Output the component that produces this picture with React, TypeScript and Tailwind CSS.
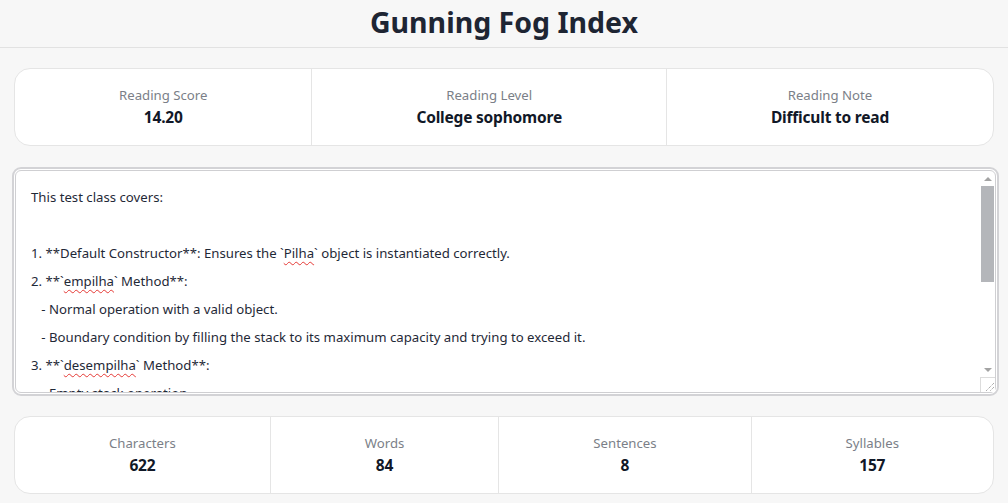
import React from "react";

const font = { fontFamily: '"Noto Sans", "Open Sans", sans-serif' };

function Stat({ label, value, last }: { label: string; value: string; last?: boolean }) {
  return (
    <div className={"flex-auto flex flex-col items-center justify-center py-4 px-6 " + (last ? "" : "border-r border-[#e5e5e5]")}>
      <div className="text-[13.2px] leading-[20px] text-[#7b7f88]">{label}</div>
      <div className="text-[15.5px] leading-[24px] font-bold text-[#111827] tracking-[-0.2px]">{value}</div>
    </div>
  );
}

function Squig({ children }: { children: React.ReactNode }) {
  return <span className="underline decoration-wavy decoration-[#e53935] decoration-1 underline-offset-[3px]">{children}</span>;
}

export default function App() {
  return (
    <div className="min-h-screen bg-[#f7f7f7] text-[#1f2937]" style={font}>
      <header className="h-[48px] border-b border-[#e2e2e2] flex items-center justify-center">
        <h1 className="text-[28.5px] leading-[36px] font-bold text-[#1e2533] -mt-[4px]">Gunning Fog Index</h1>
      </header>
      <div className="px-[14px] pt-[20px]">
        <div className="flex bg-white border border-[#e5e5e5] rounded-[16px] h-[78px]">
          <Stat label="Reading Score" value="14.20" />
          <Stat label="Reading Level" value="College sophomore" />
          <Stat label="Reading Note" value="Difficult to read" last />
        </div>
      </div>
      <div className="pl-[12px] pr-[9px] pt-[21px]">
        <div className="relative h-[229px] rounded-[9px] border-2 border-[#d3d3d6] p-px bg-white">
          <div className="h-full rounded-[6px] border border-[#cfcfd2] overflow-hidden">
            <div className="pl-[15px] pr-[30px] pt-[12px] text-[13.2px] leading-[28px] text-[#1f2937] whitespace-pre">
              <div>This test class covers:</div>
              <div>&nbsp;</div>
              <div>1. **Default Constructor**: Ensures the `<Squig>Pilha</Squig>` object is instantiated correctly.</div>
              <div>2. **`<Squig>empilha</Squig>` Method**:</div>
              <div>   - Normal operation with a valid object.</div>
              <div>   - Boundary condition by filling the stack to its maximum capacity and trying to exceed it.</div>
              <div>3. **`<Squig>desempilha</Squig>` Method**:</div>
              <div>   - Empty stack operation.</div>
            </div>
          </div>
          {/* scrollbar */}
          <div className="absolute right-[2px] top-[2px] bottom-[17px] w-[15px] flex flex-col items-center">
            <div className="h-[15px] flex items-center justify-center">
              <div className="w-0 h-0 border-l-[4px] border-r-[4px] border-b-[4px] border-l-transparent border-r-transparent border-b-[#a3a3a3]" />
            </div>
            <div className="w-[13px] h-[96px] bg-[#b4b6ba]" />
            <div className="flex-1" />
            <div className="h-[15px] flex items-center justify-center">
              <div className="w-0 h-0 border-l-[4px] border-r-[4px] border-t-[4px] border-l-transparent border-r-transparent border-t-[#a3a3a3]" />
            </div>
          </div>
          <div className="absolute right-[2px] bottom-[2px] w-[15px] h-[15px] border-l border-t border-[#dcdcdc] bg-white">
            <svg width="14" height="14" viewBox="0 0 14 14" className="absolute right-0 bottom-0">
              <line x1="13" y1="5" x2="5" y2="13" stroke="#8a8a8a" strokeWidth="1" strokeDasharray="1 1" />
              <line x1="13" y1="9" x2="9" y2="13" stroke="#8a8a8a" strokeWidth="1" strokeDasharray="1 1" />
            </svg>
          </div>
        </div>
      </div>
      <div className="px-[14px] pt-[20px] pb-[10px]">
        <div className="flex bg-white border border-[#e5e5e5] rounded-[16px] h-[78px]">
          <Stat label="Characters" value="622" />
          <Stat label="Words" value="84" />
          <Stat label="Sentences" value="8" />
          <Stat label="Syllables" value="157" last />
        </div>
      </div>
    </div>
  );
}
